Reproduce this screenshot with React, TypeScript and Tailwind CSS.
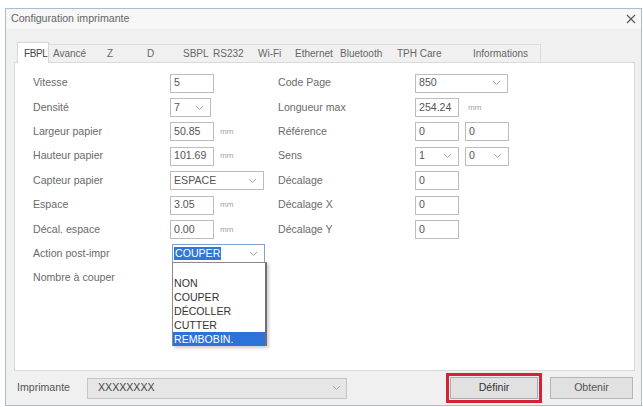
import React from "react";

const Chevron = () => (
  <svg width="9" height="6" viewBox="0 0 9 6" className="shrink-0">
    <path d="M1 1 L4.5 4.5 L8 1" fill="none" stroke="#a5a5a5" strokeWidth="1" />
  </svg>
);

const Input = ({ v, w = "w-[44px]" }: { v: string; w?: string }) => (
  <div className={`${w} h-[19px] border border-[#bcbcbc] bg-white flex items-center pl-[3px] text-[10.6px] text-[#555]`}>
    {v}
  </div>
);

const Select = ({ v, w }: { v: string; w: string }) => (
  <div className={`${w} h-[19px] border border-[#bcbcbc] bg-white flex items-center justify-between pl-[3px] pr-[6px] text-[10.6px] text-[#555]`}>
    <span>{v}</span>
    <Chevron />
  </div>
);

const Mm = ({ ml = "ml-[6px]" }: { ml?: string }) => (
  <span className={`${ml} text-[8px] text-[#a0a0a0] leading-none`}>mm</span>
);

const Row = ({ label, children }: { label: string; children?: React.ReactNode }) => (
  <div className="h-[24.4px] flex items-center">
    <div className="w-[137px] text-[10.6px] text-[#6a6a6a] whitespace-nowrap">{label}</div>
    {children}
  </div>
);

const tabs: { t: string; w: string }[] = [
  { t: "Avancé", w: "w-[54px]" },
  { t: "Z", w: "w-[40px]" },
  { t: "D", w: "w-[36px]" },
  { t: "SBPL", w: "w-[30px]" },
  { t: "RS232", w: "w-[45px]" },
  { t: "Wi-Fi", w: "w-[37px]" },
  { t: "Ethernet", w: "w-[45px]" },
  { t: "Bluetooth", w: "w-[57px]" },
  { t: "TPH Care", w: "w-[76px]" },
  { t: "Informations", w: "w-[71px]" },
];

export default function App() {
  return (
    <div
      className="w-[643px] h-[407px] bg-white pt-[8px] pl-[5px] overflow-hidden"
      style={{ fontFamily: '"Liberation Sans", Arial, sans-serif' }}
    >
      <div className="w-[637px] h-[398px] border border-[#a9bdd2] bg-[#f0f0f0] flex flex-col">
        {/* Title bar */}
        <div className="h-[20px] bg-[#f7f7f7] flex items-center justify-between pl-[5px] pr-[5px]">
          <span className="text-[10.6px] text-[#666]">Configuration imprimante</span>
          <svg width="10" height="10" viewBox="0 0 10 10">
            <path d="M1 1 L9 9 M9 1 L1 9" stroke="#555" strokeWidth="1.1" />
          </svg>
        </div>

        {/* Tabs */}
        <div className="mt-[15px] ml-[11px] flex items-end h-[18px] relative z-10">
          <div className="w-[32px] h-[21px] -mb-[1px] bg-white border border-b-0 border-[#d6d6d6] pl-[6px] flex items-center text-[10px] tracking-[-0.4px] text-[#444]">
            FBPL
          </div>
          <div className="flex h-[18px] border-t border-r border-[#dcdcdc] bg-[#f0f0f0]">
            {tabs.map((tb) => (
              <div
                key={tb.t}
                className={`${tb.w} h-full pl-[4px] flex items-center text-[10px] text-[#666] whitespace-nowrap`}
              >
                {tb.t}
              </div>
            ))}
          </div>
        </div>

        {/* Panel */}
        <div className="ml-[8px] w-[621px] h-[309px] bg-white border border-[#d9d9d9] relative pt-[8px] pl-[18px] flex">
          <div className="w-[245px] flex flex-col">
            <Row label="Vitesse"><Input v="5" /></Row>
            <Row label="Densité"><Select v="7" w="w-[41px]" /></Row>
            <Row label="Largeur papier"><Input v="50.85" /><Mm /></Row>
            <Row label="Hauteur papier"><Input v="101.69" /><Mm /></Row>
            <Row label="Capteur papier"><Select v="ESPACE" w="w-[94px]" /></Row>
            <Row label="Espace"><Input v="3.05" /><Mm /></Row>
            <Row label="Décal. espace"><Input v="0.00" /><Mm /></Row>
            <Row label="Action post-impr">
              <div className="ml-[2px] w-[93px] h-[19px] border border-[#7da2ce] bg-white flex items-center justify-between pl-[1px] pr-[6px] text-[10.6px]">
                <span className="bg-[#3277d4] text-white px-[1px] leading-[13px]">COUPER</span>
                <Chevron />
              </div>
            </Row>
            <Row label="Nombre à couper" />
          </div>
          <div className="flex flex-col">
            <Row label="Code Page"><Select v="850" w="w-[93px]" /></Row>
            <Row label="Longueur max"><Input v="254.24" /><Mm ml="ml-[9px]" /></Row>
            <Row label="Référence">
              <Input v="0" w="w-[44px]" />
              <div className="w-[6px]" />
              <Input v="0" w="w-[44px]" />
            </Row>
            <Row label="Sens">
              <Select v="1" w="w-[44px]" />
              <div className="w-[6px]" />
              <Select v="0" w="w-[44px]" />
            </Row>
            <Row label="Décalage"><Input v="0" /></Row>
            <Row label="Décalage X"><Input v="0" /></Row>
            <Row label="Décalage Y"><Input v="0" /></Row>
          </div>

          {/* Open dropdown list */}
          <div className="absolute left-[157px] top-[199px] w-[95px] h-[84px] bg-white border border-[#8a8a8a] border-r-2 border-r-[#6e6e6e] shadow-[2px_2px_3px_rgba(0,0,0,0.2)] pt-[13px] flex flex-col text-[10.6px] text-[#333]">
            <div className="h-[14px] leading-[14px] pl-[1px]">NON</div>
            <div className="h-[14px] leading-[14px] pl-[1px]">COUPER</div>
            <div className="h-[14px] leading-[14px] pl-[1px]">DÉCOLLER</div>
            <div className="h-[14px] leading-[14px] pl-[1px]">CUTTER</div>
            <div className="h-[14px] leading-[14px] pl-[1px] bg-[#2d72d9] text-white">REMBOBIN.</div>
          </div>
        </div>

        {/* Bottom bar */}
        <div className="flex-1 flex items-center pl-[11px] pr-[2px]">
          <span className="w-[70px] text-[10.6px] text-[#555]">Imprimante</span>
          <div className="w-[260px] h-[21px] border border-[#c6c6c6] bg-[#e6e6e6] flex items-center justify-between pl-[10px] pr-[5px] text-[10.6px] text-[#444]">
            <span>XXXXXXXX</span>
            <Chevron />
          </div>
          <div className="ml-[99px] w-[96px] h-[30px] border-[3px] border-[#d4213a] p-[1px] flex">
            <div className="flex-1 bg-[#e1e1e1] border border-[#adadad] flex items-center justify-center text-[10.6px] text-[#333]">
              Définir
            </div>
          </div>
          <div className="ml-[8px] w-[83px] h-[22px] bg-[#e1e1e1] border border-[#b5b5b5] flex items-center justify-center text-[10.6px] text-[#555]">
            Obtenir
          </div>
        </div>
      </div>
    </div>
  );
}
